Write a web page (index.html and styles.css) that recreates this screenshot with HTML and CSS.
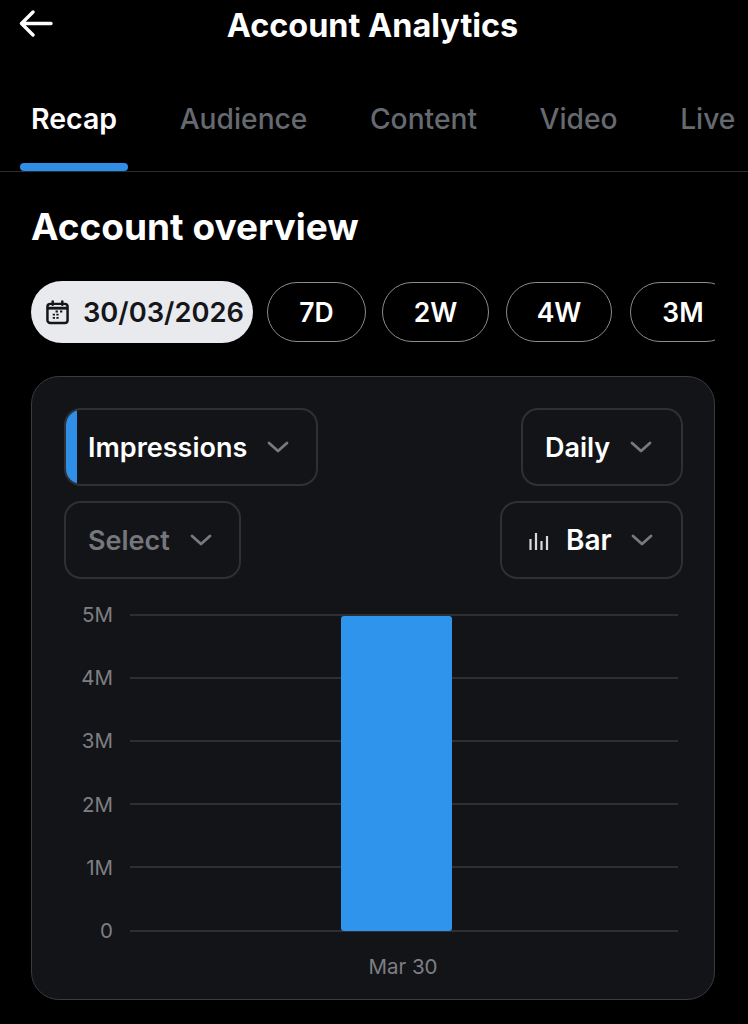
FILE: index.html
```html
<!DOCTYPE html>
<html lang="en">
<head>
    <meta charset="UTF-8">
    <meta name="viewport" content="width=device-width, initial-scale=1.0">
    <title>Account Analytics</title>
    <link rel="stylesheet" href="styles.css">
</head>
<body>

    <div class="header">
        <svg class="back" viewBox="0 0 34 28" width="34" height="28" fill="none" stroke="#fff" stroke-width="3.4" stroke-linecap="round" stroke-linejoin="round">
            <path d="M2.5 13.5H32M14 2L2.5 13.5L14 25"/>
        </svg>
        <h1>Account Analytics</h1>
    </div>

    <div class="tabs">
        <div class="tab active">Recap</div>
        <div class="tab">Audience</div>
        <div class="tab">Content</div>
        <div class="tab">Video</div>
        <div class="tab">Live</div>
    </div>

    <div class="container">
        <h2>Account overview</h2>

        <div class="pills">
            <div class="pill selected">
                <svg viewBox="0 0 24 26" width="23" height="25" fill="none">
                    <rect x="1.5" y="4" width="21" height="20" rx="3" stroke="#15161a" stroke-width="2.6"/>
                    <path d="M1.5 8.5H22.5" stroke="#15161a" stroke-width="3"/>
                    <path d="M7 1.5V5M17 1.5V5" stroke="#15161a" stroke-width="2.6" stroke-linecap="round"/>
                    <path d="M10 12H12.4M14.6 12H17M7 15.2H9.4M10.8 15.2H13.2M7 18.6H9.4M10.8 18.6H13.2" stroke="#15161a" stroke-width="2"/>
                </svg>
                <span>30/03/2026</span>
            </div>
            <div class="pill w-7d">7D</div>
            <div class="pill w-2w">2W</div>
            <div class="pill w-4w">4W</div>
            <div class="pill w-3m">3M</div>
        </div>

        <div class="card">
            <div class="controls">
                <div class="select impressions">
                    <span class="blue-tab"></span>
                    <span>Impressions</span>
                    <svg class="chev" viewBox="0 0 22 12" width="22" height="12"><path d="M2 2L11 10L20 2"/></svg>
                </div>
                <div class="select daily">
                    <span>Daily</span>
                    <svg class="chev" viewBox="0 0 22 12" width="22" height="12"><path d="M2 2L11 10L20 2"/></svg>
                </div>
            </div>
            <div class="controls">
                <div class="select empty">
                    <span>Select</span>
                    <svg class="chev" viewBox="0 0 22 12" width="22" height="12"><path d="M2 2L11 10L20 2"/></svg>
                </div>
                <div class="select bar-type">
                    <svg class="bars" viewBox="0 0 20 20" width="20" height="20"><path d="M1.5 9V20M7 3V20M12.5 11V20M18 6V20"/></svg>
                    <span>Bar</span>
                    <svg class="chev" viewBox="0 0 22 12" width="22" height="12"><path d="M2 2L11 10L20 2"/></svg>
                </div>
            </div>

            <div class="chart">
                <div class="row"><span>5M</span><i></i></div>
                <div class="row"><span>4M</span><i></i></div>
                <div class="row"><span>3M</span><i></i></div>
                <div class="row"><span>2M</span><i></i></div>
                <div class="row"><span>1M</span><i></i></div>
                <div class="row"><span>0</span><i></i></div>
                <div class="bar"></div>
            </div>
            <div class="x-label">Mar 30</div>
        </div>
    </div>

</body>
</html>
```

FILE: styles.css
```css
html, body {
    height: 100%;
}
body {
    font-family: 'Inter', 'Liberation Sans', sans-serif;
    background-color: #000;
    color: #fff;
    margin: 0;
    padding: 0;
    overflow: hidden;
}
.header {
    display: flex;
    justify-content: center;
    align-items: center;
    position: relative;
    height: 50px;
    padding-right: 3px;
}
.header .back {
    position: absolute;
    left: 19px;
    top: 10px;
}
h1 {
    margin: 0;
    font-size: 32.4px;
    font-weight: 700;
}
.tabs {
    display: flex;
    gap: 40.5px;
    margin-top: 42px;
    height: 79px;
    padding-left: 20px;
    border-bottom: 1px solid #2b2c30;
    box-sizing: content-box;
}
.tab {
    position: relative;
    padding: 10px 11px 0;
    font-size: 28.2px;
    font-weight: 500;
    color: #666a70;
    white-space: nowrap;
}
.tab.active {
    padding-top: 9px;
    color: #fff;
    font-weight: 600;
    font-size: 28.5px;
}
.tab.active::after {
    content: "";
    position: absolute;
    left: 0;
    right: 0;
    bottom: 0;
    height: 8px;
    border-radius: 4px;
    background: #2f8fe6;
}
.container {
    padding: 0 33px 0 31px;
}
h2 {
    margin: 34px 0 0;
    font-size: 37px;
    line-height: 42px;
    font-weight: 700;
}
.pills {
    display: flex;
    gap: 15px;
    margin-top: 33px;
    overflow: hidden;
    align-items: center;
}
.pill {
    display: flex;
    align-items: center;
    justify-content: center;
    flex-shrink: 0;
    box-sizing: border-box;
    height: 60px;
    border: 1.5px solid #8a8c91;
    border-radius: 30px;
    font-size: 26.5px;
    font-weight: 600;
}
.pill.selected {
    justify-content: flex-start;
    gap: 14px;
    width: 222px;
    height: 62px;
    padding-left: 15px;
    margin-right: -1px;
    border: none;
    border-radius: 31px;
    background: #e9eaee;
    color: #15161a;
    font-size: 27.3px;
}
.w-7d { width: 99px; }
.w-2w { width: 107px; margin-left: 1px; }
.w-4w { width: 106px; margin-left: 2px; }
.w-3m { width: 106px; margin-left: 3px; }
.card {
    box-sizing: border-box;
    height: 624px;
    margin-top: 33px;
    padding: 31px 31px 0 32px;
    background: #131418;
    border: 1.5px solid #3a3b40;
    border-radius: 28px;
}
.controls {
    display: flex;
    justify-content: space-between;
}
.controls + .controls {
    margin-top: 15px;
}
.select {
    position: relative;
    display: flex;
    align-items: center;
    box-sizing: border-box;
    height: 78px;
    padding-left: 22px;
    gap: 20px;
    border: 2px solid #2f3035;
    border-radius: 17px;
    font-size: 27px;
    font-weight: 600;
    overflow: hidden;
}
.impressions { width: 254px; }
.daily { width: 162px; }
.empty { width: 177px; color: #75777c; }
.bar-type { width: 183px; gap: 17px; padding-left: 27px; font-size: 28px; }
.bar-type .chev { margin-left: 2px; }
.blue-tab {
    position: absolute;
    left: -2px;
    top: -2px;
    bottom: -2px;
    width: 13px;
    background: #2f8fe6;
}
.chev {
    fill: none;
    stroke: #77797e;
    stroke-width: 2.8;
    stroke-linecap: round;
    stroke-linejoin: round;
}
.bars {
    fill: none;
    stroke: #d8d9dc;
    stroke-width: 2.2;
}
.chart {
    position: relative;
    display: flex;
    flex-direction: column;
    margin-top: 4px;
}
.row {
    display: flex;
    align-items: center;
    gap: 17px;
    height: 63.2px;
    margin-right: 5px;
}
.row span {
    width: 49px;
    text-align: right;
    font-size: 20.5px;
    color: #7d7f84;
}
.row i {
    flex: 1;
    height: 2px;
    background: #2e2f34;
}
.bar {
    position: absolute;
    left: 277px;
    top: 33px;
    width: 111px;
    height: 315px;
    border-radius: 3px;
    background: #2f95ec;
}
.x-label {
    box-sizing: border-box;
    width: 100%;
    padding-left: 59px;
    margin-top: -8px;
    text-align: center;
    font-size: 20.5px;
    color: #7d7f84;
}
```
